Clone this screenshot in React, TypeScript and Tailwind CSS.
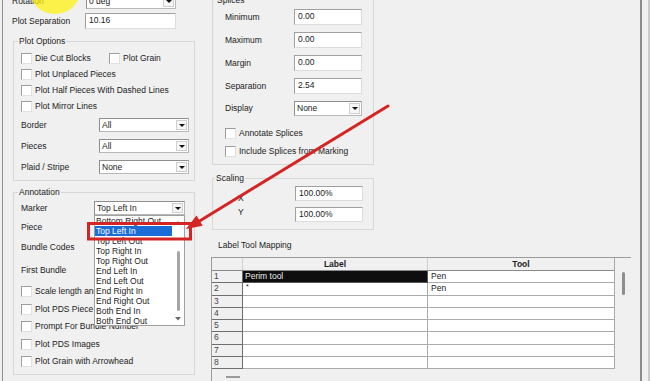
import React from "react";

const Tri = () => (
  <div className="w-0 h-0 border-l-[3px] border-r-[3px] border-t-[3px] border-l-transparent border-r-transparent border-t-[#111]" />
);

function Combo({ className, value }: { className: string; value: string }) {
  return (
    <div
      className={`flex items-stretch bg-white border border-[#b8b8b8] border-t-[#8e8e8e] border-l-[#8e8e8e] ${className}`}
    >
      <span className="flex-1 pl-[2px] flex items-center whitespace-nowrap overflow-hidden">{value}</span>
      <span className="m-[1px] w-[11px] border border-[#cfcfcf] bg-[#f6f6f6] flex items-center justify-center">
        <Tri />
      </span>
    </div>
  );
}

function TextBox({ className, value }: { className: string; value?: string }) {
  return (
    <div
      className={`bg-white border border-[#dcdcdc] border-t-[#a0a0a0] border-l-[#a0a0a0] pl-[3px] pt-[1px] leading-[11px] whitespace-nowrap ${className}`}
    >
      {value}
    </div>
  );
}

function Check({ label }: { label: string }) {
  return (
    <div className="flex items-center gap-[3px] whitespace-nowrap">
      <span className="w-[11px] h-[11px] shrink-0 bg-white border border-[#e0e0e0] border-t-[#9c9c9c] border-l-[#9c9c9c]" />
      <span>{label}</span>
    </div>
  );
}

function Group({
  title,
  titleClass,
  className,
  children,
}: {
  title: string;
  titleClass: string;
  className: string;
  children?: React.ReactNode;
}) {
  return (
    <div className={`relative shrink-0 border border-[#d6d6d6] ${className}`}>
      <span className={`absolute px-[1px] bg-[#f0f0f0] leading-[11px] whitespace-nowrap ${titleClass}`}>
        {title}
      </span>
      {children}
    </div>
  );
}

const markers = [
  "Bottom Right Out",
  "Top Left In",
  "Top Left Out",
  "Top Right In",
  "Top Right Out",
  "End Left In",
  "End Left Out",
  "End Right In",
  "End Right Out",
  "Both End In",
  "Both End Out",
];

export default function App() {
  const rows = [1, 2, 3, 4, 5, 6, 7, 8];
  return (
    <div className="relative w-[650px] h-[381px] overflow-hidden bg-[#f0f0f0] text-[#222] text-[8.5px] leading-[11px] font-['Liberation_Sans',Arial,sans-serif] flex">
      {/* left window edge */}
      <div className="w-[3px] shrink-0 border-r border-[#8f8f8f]" />

      {/* left column */}
      <div className="w-[205px] shrink-0 flex flex-col">
        <div className="-mt-[7px] h-[16px] flex items-center shrink-0">
          <span className="pl-[9px] w-[83px]">Rotation</span>
          <Combo className="w-[90px] h-[16px]" value="0 deg" />
        </div>
        <div className="mt-[4px] h-[16px] flex items-center shrink-0">
          <span className="pl-[9px] w-[82px]">Plot Separation</span>
          <TextBox className="w-[91px] h-[16px]" value="10.16" />
        </div>

        <Group
          title="Plot Options"
          titleClass="-top-[6px] left-[4px]"
          className="ml-[10px] mt-[12px] w-[182px] h-[140px] pt-[8px] pl-[7px]"
        >
          <div className="h-[16px] flex items-center">
            <div className="w-[88px]">
              <Check label="Die Cut Blocks" />
            </div>
            <Check label="Plot Grain" />
          </div>
          <div className="h-[16px] flex items-center">
            <Check label="Plot Unplaced Pieces" />
          </div>
          <div className="h-[16px] flex items-center">
            <Check label="Plot Half Pieces With Dashed Lines" />
          </div>
          <div className="h-[16px] flex items-center">
            <Check label="Plot Mirror Lines" />
          </div>
          <div className="mt-[4px] h-[14px] flex items-center">
            <span className="w-[78px]">Border</span>
            <Combo className="w-[90px] h-[14px]" value="All" />
          </div>
          <div className="mt-[7px] h-[14px] flex items-center">
            <span className="w-[78px]">Pieces</span>
            <Combo className="w-[90px] h-[14px]" value="All" />
          </div>
          <div className="mt-[7px] h-[14px] flex items-center">
            <span className="w-[78px]">Plaid / Stripe</span>
            <Combo className="w-[90px] h-[14px]" value="None" />
          </div>
        </Group>

        <Group
          title="Annotation"
          titleClass="-top-[6px] left-[4px]"
          className="ml-[10px] mt-[11px] w-[182px] h-[183px] pt-[8px] pl-[7px]"
        >
          <div className="h-[14px] flex items-center">
            <span className="w-[73px]">Marker</span>
            <Combo className="w-[91px] h-[14px]" value="Top Left In" />
          </div>
          <div className="mt-[5px] h-[14px] flex items-center">
            <span className="w-[73px]">Piece</span>
            <Combo className="w-[91px] h-[14px]" value="" />
          </div>
          <div className="mt-[6px] h-[14px] flex items-center">
            <span className="w-[73px]">Bundle Codes</span>
            <TextBox className="w-[91px] h-[14px]" />
          </div>
          <div className="mt-[9px] h-[14px] flex items-center">
            <span className="w-[73px]">First Bundle</span>
            <TextBox className="w-[91px] h-[14px]" />
          </div>
          <div className="mt-[6px] h-[17.5px] flex items-center">
            <Check label="Scale length and width" />
          </div>
          <div className="h-[17.5px] flex items-center">
            <Check label="Plot PDS Piece Annotation" />
          </div>
          <div className="h-[17.5px] flex items-center">
            <Check label="Prompt For Bundle Number" />
          </div>
          <div className="h-[17.5px] flex items-center">
            <Check label="Plot PDS Images" />
          </div>
          <div className="h-[17.5px] flex items-center">
            <Check label="Plot Grain with Arrowhead" />
          </div>

          {/* open dropdown list */}
          <div className="absolute left-[80px] top-[22px] w-[91px] h-[111px] bg-white border border-[#a0a0a0] flex overflow-hidden">
            <div className="flex-1 flex flex-col">
              {markers.map((m, i) => (
                <div
                  key={m}
                  className={
                    i === 1
                      ? "h-[10px] shrink-0 leading-[10px] pl-[1px] whitespace-nowrap bg-[#1a6dd6] text-white"
                      : "h-[10px] shrink-0 leading-[10px] pl-[1px] whitespace-nowrap"
                  }
                >
                  {m}
                </div>
              ))}
            </div>
            <div className="w-[12px] shrink-0 flex flex-col items-center">
              <svg className="mt-[4px]" width="6" height="4" viewBox="0 0 6 4">
                <path d="M0.5 3.5 L3 1 L5.5 3.5" fill="none" stroke="#c4c4c4" strokeWidth="1" />
              </svg>
              <div className="mt-[27px] w-[3px] h-[60px] rounded-full bg-[#a6a6a6]" />
              <svg className="mt-[6px]" width="6" height="4" viewBox="0 0 6 4">
                <path d="M0 0 L6 0 L3 3.5 Z" fill="#6a6a6a" />
              </svg>
            </div>
          </div>
        </Group>
      </div>

      {/* right column */}
      <div className="w-[432px] shrink-0 flex flex-col">
        <Group
          title="Splices"
          titleClass="-top-[3px] left-[3px]"
          className="ml-[4px] -mt-[3px] w-[162px] h-[168px] pt-[11px] pl-[12px]"
        >
          <div className="h-[16px] flex items-center">
            <span className="w-[69px]">Minimum</span>
            <TextBox className="w-[68px] h-[16px]" value="0.00" />
          </div>
          <div className="mt-[7px] h-[16px] flex items-center">
            <span className="w-[69px]">Maximum</span>
            <TextBox className="w-[68px] h-[16px]" value="0.00" />
          </div>
          <div className="mt-[7px] h-[16px] flex items-center">
            <span className="w-[69px]">Margin</span>
            <TextBox className="w-[68px] h-[16px]" value="0.00" />
          </div>
          <div className="mt-[7px] h-[16px] flex items-center">
            <span className="w-[69px]">Separation</span>
            <TextBox className="w-[68px] h-[16px]" value="2.54" />
          </div>
          <div className="mt-[7px] h-[15px] flex items-center">
            <span className="w-[69px]">Display</span>
            <Combo className="w-[68px] h-[15px]" value="None" />
          </div>
          <div className="mt-[8px] h-[18px] flex items-center">
            <Check label="Annotate Splices" />
          </div>
          <div className="h-[18px] flex items-center">
            <Check label="Include Splices from Marking" />
          </div>
        </Group>

        <Group title="Scaling" titleClass="-top-[6px] left-[2px]" className="ml-[4px] mt-[13px] w-[162px] h-[52px]">
          <div className="flex">
            <div className="w-[82px] pl-[25px] pt-[13.5px] flex flex-col gap-[3px]">
              <span>X</span>
              <span>Y</span>
            </div>
            <div className="pt-[7px] flex flex-col gap-[6px]">
              <TextBox className="w-[68px] h-[15px]" value="100.00%" />
              <TextBox className="w-[68px] h-[15px]" value="100.00%" />
            </div>
          </div>
        </Group>

        <div className="mt-[10px] pl-[10px] h-[11px] leading-[11px] shrink-0">Label Tool Mapping</div>

        <div className="ml-[3px] mt-[6px] w-[420px] flex-1 border-t border-l border-[#9c9c9c] flex flex-col">
          <div className="flex">
            <div className="w-[403px] border-r border-[#a8a8a8]">
              <div className="flex h-[13px] border-b border-[#8a8a8a]">
                <div className="w-[31px] border-r border-[#d0d0d0]" />
                <div className="w-[185px] border-r border-[#d0d0d0] flex items-center justify-center font-bold">
                  Label
                </div>
                <div className="flex-1 flex items-center justify-center font-bold">Tool</div>
              </div>
              {rows.map((r) => (
                <div key={r} className="flex h-[12.25px]">
                  <div className="w-[31px] bg-[#f0f0f0] border-b border-r border-[#6e6e6e] pl-[2px] leading-[11px] text-[#444]">
                    {r}
                  </div>
                  {r === 1 ? (
                    <div className="w-[185px] bg-[#0e0e0e] text-[#e8e8e8] border-b border-r border-[#555] pl-[2px] leading-[11px]">
                      Perim tool
                    </div>
                  ) : r === 2 ? (
                    <div className="w-[185px] bg-white border-b border-r border-[#ababab] pl-[3px] text-[7px] leading-[7px]">
                      *
                    </div>
                  ) : (
                    <div className="w-[185px] bg-white border-b border-r border-[#ababab]" />
                  )}
                  <div className="flex-1 bg-white border-b border-[#ababab] pl-[3px] leading-[11px]">
                    {r <= 2 ? "Pen" : ""}
                  </div>
                </div>
              ))}
            </div>
            <div className="flex-1">
              <div className="mt-[14px] ml-[7px] w-[3px] h-[23px] rounded-full bg-[#8e8e8e]" />
            </div>
          </div>
          <div className="mt-[7px] ml-[14px] w-[14px] h-[2px] bg-[#9a9a9a]" />
        </div>
      </div>

      {/* right window edge */}
      <div className="w-[2px] shrink-0 bg-[#8a8a8a]" />
      <div className="w-[6px] shrink-0" />
      <div className="w-[2px] shrink-0 bg-[#cacaca]" />

      {/* yellow highlight */}
      <div className="absolute left-[29px] -top-[38px] w-[52px] h-[52px] rounded-full bg-[#fff100] opacity-70 pointer-events-none" />

      {/* red annotation */}
      <svg className="absolute left-0 top-0 pointer-events-none" width="650" height="381" viewBox="0 0 650 381">
        <line x1="388" y1="106" x2="200" y2="220.7" stroke="#d42424" strokeWidth="3" strokeLinecap="round" />
        <polygon points="186,229 202.7,225.8 196.5,215.6" fill="#d42424" />
        <rect x="88.5" y="223.5" width="102" height="15.5" fill="none" stroke="#d42424" strokeWidth="3" />
      </svg>
    </div>
  );
}
